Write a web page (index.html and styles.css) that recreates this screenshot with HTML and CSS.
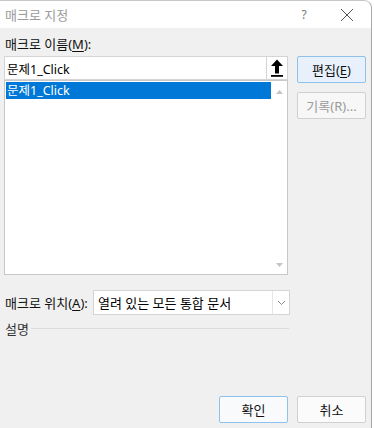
FILE: index.html
```html
<!DOCTYPE html>
<html lang="ko">
<head>
<meta charset="utf-8">
<link rel="stylesheet" href="styles.css">
</head>
<body>
<div class="dialog">
  <div class="titlebar">
    <span class="title">매크로 지정</span>
    <span class="help">?</span>
    <span class="close"><svg width="14" height="14" viewBox="0 0 14 14"><path d="M1 1L13 13M13 1L1 13" stroke="#555" stroke-width="1" fill="none"/></svg></span>
  </div>
  <div class="content">
    <div class="label">매크로 이름(<u>M</u>):</div>
    <div class="main">
      <div class="leftcol">
        <div class="namebox">
          <span class="nametext">문제1_Click</span>
          <span class="upbtn"><svg width="14" height="18" viewBox="0 0 14 18"><path d="M7 0.5L1 7H5V14.5H9V7H13Z" fill="#000"/><rect x="1" y="16" width="12" height="1.8" fill="#000"/></svg></span>
        </div>
        <div class="listbox">
          <div class="items">
            <div class="item sel">문제1_Click</div>
          </div>
          <div class="scroll">
            <svg width="9" height="6" viewBox="0 0 9 6"><path d="M4.5 1L8 5H1Z" fill="#c4c4c4"/></svg>
            <svg width="9" height="6" viewBox="0 0 9 6"><path d="M1 1H8L4.5 5Z" fill="#c4c4c4"/></svg>
          </div>
        </div>
      </div>
      <div class="rightcol">
        <div class="btn default">편집(<u>E</u>)</div>
        <div class="btn disabled">기록(R)...</div>
      </div>
    </div>
    <div class="locrow">
      <span class="loclabel">매크로 위치(<u>A</u>):</span>
      <div class="select">
        <span class="seltext">열려 있는 모든 통합 문서</span>
        <span class="chev"><svg width="9" height="6" viewBox="0 0 9 6"><path d="M1 1L4.5 4.5L8 1" stroke="#888" stroke-width="1" fill="none"/></svg></span>
      </div>
    </div>
    <div class="descrow">
      <span class="desclabel">설명</span>
      <span class="descline"></span>
    </div>
    <div class="footer">
      <div class="btn default">확인</div>
      <div class="btn">취소</div>
    </div>
  </div>
</div>
</body>
</html>
```

FILE: styles.css
```css
html, body {
  margin: 0;
  padding: 0;
  background: #ffffff;
}
body {
  width: 374px;
  height: 428px;
  overflow: hidden;
  font-family: "Noto Sans", "Noto Sans CJK KR", sans-serif;
  font-size: 13px;
  color: #111;
}
u {
  text-decoration: underline;
  text-underline-offset: 2px;
}
.dialog {
  width: 372px;
  height: 428px;
  box-sizing: border-box;
  border-top: 1px solid #c8c8c8;
  border-right: 1px solid #a8a8a8;
  border-top-right-radius: 8px;
  overflow: hidden;
  display: flex;
  flex-direction: column;
  background: #f0f0f0;
}
.titlebar {
  height: 27px;
  background: #ffffff;
  display: flex;
  align-items: center;
  padding-left: 5px;
  flex-shrink: 0;
}
.title {
  color: #9a9a9a;
  font-size: 13px;
  flex: 1;
}
.help {
  color: #777;
  font-size: 12px;
  width: 20px;
  text-align: center;
  margin-right: 26px;
}
.close {
  width: 14px;
  height: 14px;
  margin-right: 17px;
  display: flex;
}
.content {
  flex: 1;
  display: flex;
  flex-direction: column;
  padding: 0 5px 5px 4px;
}
.label {
  margin-top: 8px;
  line-height: 16px;
  padding-left: 1px;
}
.main {
  margin-top: 4px;
  display: flex;
  gap: 9px;
}
.leftcol {
  width: 285px;
  display: flex;
  flex-direction: column;
}
.namebox {
  height: 24px;
  box-sizing: border-box;
  border: 1px solid #d4d4d4;
  background: #fff;
  display: flex;
  align-items: center;
}
.nametext {
  flex: 1;
  padding-left: 2px;
  font-size: 12.5px;
  color: #000;
}
.upbtn {
  width: 20px;
  height: 22px;
  border-left: 1px solid #d4d4d4;
  display: flex;
  align-items: center;
  justify-content: center;
}
.listbox {
  height: 195px;
  box-sizing: border-box;
  border: 1px solid #c8c8c8;
  background: #fff;
  display: flex;
}
.items {
  flex: 1;
  padding: 1px 0 0 1px;
}
.item {
  height: 17px;
  line-height: 17px;
  padding-left: 1px;
  font-size: 12.5px;
}
.item.sel {
  background: #0078d7;
  color: #fff;
}
.scroll {
  width: 16px;
  display: flex;
  flex-direction: column;
  justify-content: space-between;
  align-items: center;
  padding: 8px 0 6px;
}
.rightcol {
  display: flex;
  flex-direction: column;
  gap: 9px;
}
.btn {
  width: 69px;
  height: 27px;
  box-sizing: border-box;
  border: 1px solid #d0d0d0;
  border-radius: 2px;
  background: #fbfbfb;
  display: flex;
  align-items: center;
  justify-content: center;
  color: #111;
}
.btn.default {
  border-color: #8ec1ec;
  background: #eef5fc;
}
.rightcol .btn.default {
  background: #e8f1fb;
}
.btn.disabled {
  color: #9a9a9a;
  background: #f7f7f7;
}
.locrow {
  margin-top: 15px;
  display: flex;
  align-items: center;
  gap: 2px;
}
.loclabel {
  padding-left: 1px;
  width: 86px;
  white-space: nowrap;
}
.select {
  width: 197px;
  height: 25px;
  box-sizing: border-box;
  border: 1px solid #d4d4d4;
  background: #fff;
  display: flex;
  align-items: center;
}
.seltext {
  flex: 1;
  padding-left: 4px;
  font-size: 13px;
  color: #000;
}
.chev {
  width: 16px;
  height: 23px;
  border-left: 1px solid #e6e6e6;
  display: flex;
  align-items: center;
  justify-content: center;
}
.descrow {
  margin-top: 5px;
  display: flex;
  align-items: center;
  width: 285px;
  gap: 2px;
  height: 16px;
}
.desclabel {
  padding-left: 1px;
  color: #333;
}
.descline {
  flex: 1;
  height: 1px;
  background: #dcdcdc;
}
.footer {
  margin-top: auto;
  display: flex;
  justify-content: flex-end;
  gap: 9px;
}
.footer .btn.default {
  background: #f8fafc;
}
```
